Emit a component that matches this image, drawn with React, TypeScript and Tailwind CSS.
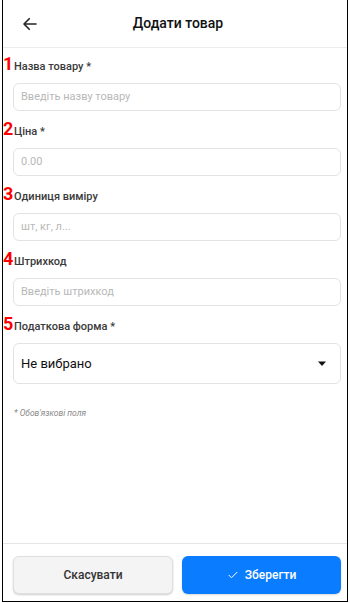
import React from "react";

const font = { fontFamily: "Roboto, 'Noto Sans', sans-serif" };

function Field({ n, label, placeholder }: { n: string; label: string; placeholder: string }) {
  return (
    <div className="relative">
      <span className="absolute left-[-10px] top-[-5px] text-[18px] font-bold leading-none text-[#ff0000]">{n}</span>
      <div className="h-[14px] pl-px text-[11px] font-medium leading-[14px] text-[#3a3a3a]">{label}</div>
      <div className="mt-[9px] flex h-[28px] items-center rounded-[6px] border border-[#e3e3e3] px-[7px] text-[11px] text-[#b8b8b8]">
        {placeholder}
      </div>
    </div>
  );
}

export default function App() {
  return (
    <div className="h-[603px] w-[350px] overflow-hidden bg-white" style={font}>
      <div className="ml-[2px] flex h-[602px] w-[346px] flex-col border-x border-b border-black">
        <div className="relative flex h-[48px] shrink-0 items-center justify-center border-b border-[#ececec]">
          <svg className="absolute left-[18px] top-[15px]" width="18" height="18" viewBox="0 0 24 24" fill="none" stroke="#222" strokeWidth="2.2" strokeLinecap="round" strokeLinejoin="round">
            <path d="M20 12H5" />
            <path d="M11 5l-7 7 7 7" />
          </svg>
          <span className="ml-[6px] text-[14px] font-medium text-[#111]">Додати товар</span>
        </div>
        <div className="flex flex-1 flex-col gap-[14px] pl-[10px] pr-[6px] pt-[12px]">
          <Field n="1" label="Назва товару *" placeholder="Введіть назву товару" />
          <Field n="2" label="Ціна *" placeholder="0.00" />
          <Field n="3" label="Одиниця виміру" placeholder="шт, кг, л..." />
          <Field n="4" label="Штрихкод" placeholder="Введіть штрихкод" />
          <div className="relative">
            <span className="absolute left-[-10px] top-[-5px] text-[18px] font-bold leading-none text-[#ff0000]">5</span>
            <div className="h-[14px] pl-px text-[11px] font-medium leading-[14px] text-[#3a3a3a]">Податкова форма *</div>
            <div className="mt-[9px] flex h-[41px] items-center justify-between rounded-[6px] border border-[#e3e3e3] pl-[7px] pr-[13px]">
              <span className="text-[13px] text-[#111]">Не вибрано</span>
              <svg width="10" height="6" viewBox="0 0 10 6">
                <path d="M1 0.5h8L5 5z" fill="#111" />
              </svg>
            </div>
            <div className="mt-[23px] pl-px text-[8.5px] italic text-[#8a8a8a]">* Обов'язкові поля</div>
          </div>
        </div>
        <div className="flex h-[58px] shrink-0 gap-[9px] border-t border-[#e6e6e6] pl-[10px] pr-[6px] pt-[12px]">
          <div className="flex h-[38px] w-[160px] items-center justify-center rounded-[6px] border border-[#e0e0e0] bg-[#f4f4f4] text-[12px] font-medium text-[#333] shadow-[0_1px_2px_rgba(0,0,0,0.2)]">
            Скасувати
          </div>
          <div className="flex h-[38px] flex-1 items-center justify-center gap-[6px] rounded-[6px] bg-[#0a7cff] text-[12px] font-medium text-white shadow-[0_1px_2px_rgba(0,0,0,0.15)]">
            <svg width="12" height="12" viewBox="0 0 24 24" fill="none" stroke="white" strokeWidth="2" strokeLinecap="round" strokeLinejoin="round">
              <path d="M4 12.5l5 5L20 6.5" />
            </svg>
            Зберегти
          </div>
        </div>
      </div>
    </div>
  );
}
